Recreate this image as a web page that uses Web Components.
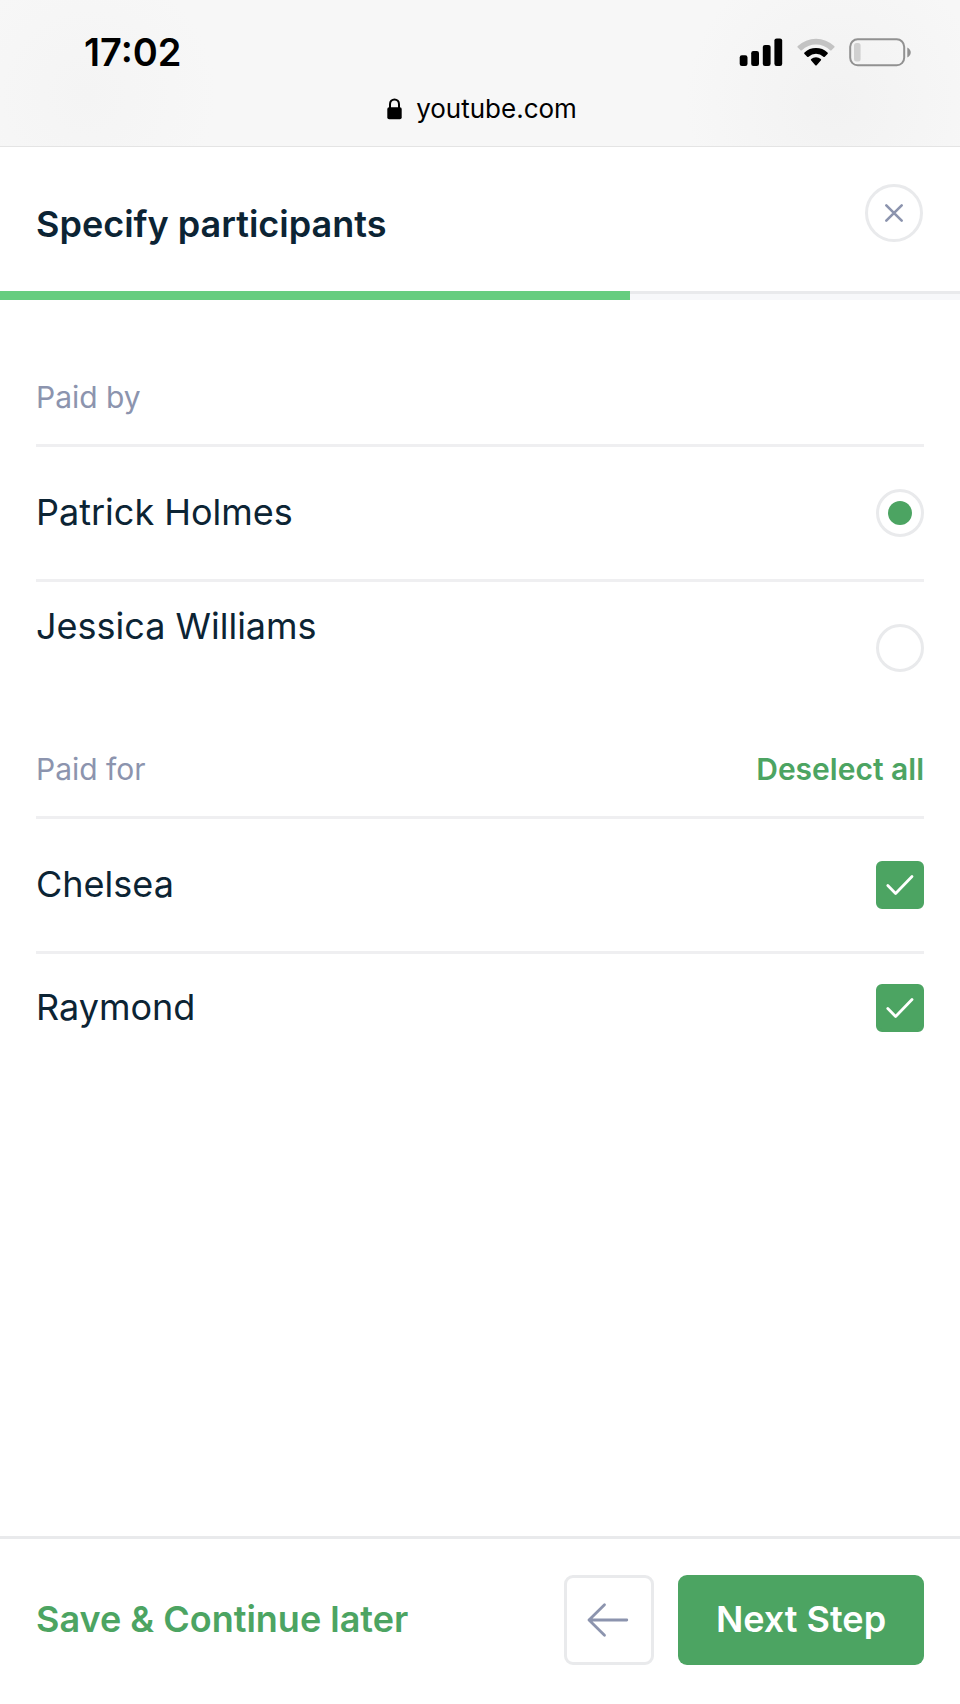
<!DOCTYPE html>
<html lang="en">
<head>
<meta charset="utf-8">
<meta name="viewport" content="width=device-width, initial-scale=1">
<title>Specify participants</title>
<style>
  :root {
    --ink: #0c2434;
    --muted: #8c94ae;
    --green: #4ca462;
    --green-light: #66cd7f;
    --line: #e9eaec;
    --rule: #efeff1;
  }
  body {
    margin: 0;
    background: #fff;
    color: var(--ink);
    font: 400 36px/44px Inter, "Liberation Sans", sans-serif;
  }
</style>
</head>
<body>
<expense-page>
  <browser-bar slot="top" time="17:02">youtube.com</browser-bar>
  <step-header slot="top">Specify participants</step-header>
  <participant-group legend="Paid by">
    <participant-row type="radio" checked>Patrick Holmes</participant-row>
    <participant-row type="radio" class="raised">Jessica Williams</participant-row>
  </participant-group>
  <participant-group legend="Paid for" action="Deselect all">
    <participant-row type="checkbox" checked>Chelsea</participant-row>
    <participant-row type="checkbox" class="compact" checked>Raymond</participant-row>
  </participant-group>
  <step-footer slot="bottom"></step-footer>
</expense-page>

<script>
class BaseElement extends HTMLElement {
  constructor() {
    super();
    this.attachShadow({ mode: "open" });
  }
  render(html) {
    this.shadowRoot.innerHTML = `<style>
      *, *::before { box-sizing: border-box; }
      button { margin: 0; padding: 0; border: 0; background: none; font: inherit; color: inherit; cursor: pointer; }
      svg { display: block; flex: none; }
    </style>` + html;
  }
}

customElements.define("expense-page", class extends BaseElement {
  connectedCallback() {
    this.render(`<style>
      :host { display: flex; flex-direction: column; min-height: 100vh; }
      main { flex: 1; padding: 42px 36px; }
    </style>
    <slot name="top"></slot>
    <main><slot></slot></main>
    <slot name="bottom"></slot>`);
  }
});

customElements.define("browser-bar", class extends BaseElement {
  connectedCallback() {
    this.render(`<style>
      :host {
        display: block; padding: 31px 48px 19px 84px; color: #000;
        border-bottom: 1px solid #e4e4e4;
        background:
          radial-gradient(circle at 87% 70%, #f2f2f2, #f2f2f200 150px),
          radial-gradient(circle at 9% 65%, #f4f4f4, #f4f4f400 130px),
          #f7f7f7;
      }
      .status { display: flex; align-items: center; gap: 14px; }
      time { flex: 1; padding-bottom: 2px; font-size: 38px; line-height: 42px; font-weight: 600; }
      .address {
        display: flex; align-items: center; justify-content: center; gap: 14px;
        margin: 16px 0 0 -32px; font-size: 26px; line-height: 36px;
      }
    </style>
    <div class="status">
      <time>${this.getAttribute("time")}</time>
      <svg width="44" height="30" viewBox="0 0 44 30" role="img" aria-label="Signal">
        <rect x="0.7" y="17.3" width="7.8" height="10.6" rx="2.2"/>
        <rect x="12.2" y="13" width="7.8" height="14.9" rx="2.2"/>
        <rect x="23.8" y="6.9" width="7.8" height="21" rx="2.2"/>
        <rect x="35.4" y="0.4" width="7.8" height="27.5" rx="2.2"/>
      </svg>
      <svg width="38" height="30" viewBox="0 0 38 30" role="img" aria-label="Wi-Fi">
        <path d="M.8 9.5a1 1 0 0 1 0-1.5 26.5 26.5 0 0 1 36.4 0 1 1 0 0 1 0 1.5L34.5 12.2a1 1 0 0 1-1.4 0 20.6 20.6 0 0 0-28.2 0 1 1 0 0 1-1.4 0z" fill="#c3c3c3"/>
        <path d="M7.5 16a1 1 0 0 1 0-1.5 17 17 0 0 1 23 0 1 1 0 0 1 0 1.5L27.8 18.7a1 1 0 0 1-1.4 0 11 11 0 0 0-14.8 0 1 1 0 0 1-1.4 0z"/>
        <path d="M14.2 22.6a1 1 0 0 1 0-1.5 7.5 7.5 0 0 1 9.6 0 1 1 0 0 1 0 1.5L19.7 27.2a1 1 0 0 1-1.4 0z"/>
      </svg>
      <svg width="63" height="30" viewBox="0 0 63 30" role="img" aria-label="Battery low">
        <rect x="1.2" y="1.3" width="54" height="26" rx="7.5" fill="none" stroke="#919191" stroke-width="2"/>
        <rect x="5" y="5" width="6.6" height="18.4" rx="2.5" fill="#d0d0d0"/>
        <path d="M58.3 9.5c4.6 2.3 4.6 7.7 0 10z" fill="#919191"/>
      </svg>
    </div>
    <div class="address">
      <svg width="15" height="22" viewBox="0 0 15 22" aria-hidden="true">
        <path d="M3 10V6.2a4.5 4.8 0 0 1 9 0V10" fill="none" stroke="#000" stroke-width="2"/>
        <rect x="0.3" y="9.3" width="14.4" height="12" rx="1.8"/>
      </svg>
      <span><slot></slot></span>
    </div>`);
  }
});

customElements.define("step-header", class extends BaseElement {
  connectedCallback() {
    this.render(`<style>
      :host { display: block; }
      header { display: flex; justify-content: space-between; align-items: flex-start; padding: 37px 37px 45px 36px; }
      h1 { margin: 18px 0 0; font-size: 36px; line-height: 44px; font-weight: 600; }
      button { display: grid; place-items: center; width: 58px; height: 58px; border: 3px solid var(--line); border-radius: 50%; }
      .progress { display: grid; grid-template-columns: 21fr 11fr; height: 9px; }
      .done { background: var(--green-light); }
      .left { background: #f7f8fa; border-top: 3px solid var(--line); }
    </style>
    <header>
      <h1><slot></slot></h1>
      <button type="button" aria-label="Close">
        <svg width="20" height="20" viewBox="0 0 20 20"><path d="M2.300 2.300l15.400 15.400M17.700 2.300L2.300 17.700" stroke="#8c94ae" stroke-width="2.600" stroke-linecap="round"/></svg>
      </button>
    </header>
    <div class="progress" role="progressbar" aria-label="Progress" aria-valuenow="66" aria-valuemin="0" aria-valuemax="100">
      <div class="done"></div><div class="left"></div>
    </div>`);
  }
});

customElements.define("participant-group", class extends BaseElement {
  connectedCallback() {
    const legend = this.getAttribute("legend");
    const action = this.getAttribute("action");
    this.render(`<style>
      :host { display: block; }
      .head { display: flex; justify-content: space-between; padding: 37px 0 29px; font-size: 30px; line-height: 36px; }
      h2 { margin: 0; font: inherit; color: var(--muted); }
      button { color: var(--green); font-weight: 600; }
    </style>
    <section role="group" aria-label="${legend}">
      <div class="head"><h2>${legend}</h2>${action ? `<button type="button">${action}</button>` : ""}</div>
      <slot></slot>
    </section>`);
    this.shadowRoot.querySelector("button")?.addEventListener("click", () => {
      for (const row of this.children) row.input.checked = false;
    });
    // Each radio lives in its own shadow root, so the group keeps them exclusive.
    this.addEventListener("pick", (e) => {
      if (e.target.input.type !== "radio") return;
      for (const row of this.children) row.input.checked = row === e.target;
    });
  }
});

customElements.define("participant-row", class extends BaseElement {
  get input() { return this.shadowRoot.querySelector("input"); }
  connectedCallback() {
    this.render(`<style>
      :host { display: block; border-top: 3px solid var(--rule); }
      label { display: flex; justify-content: space-between; align-items: center; height: 132px; cursor: pointer; }
      span { padding-bottom: 2px; }
      :host(.raised) span { padding-bottom: 44px; }
      :host(.compact) label { height: 108px; }
      .box { display: grid; flex: none; }
      .box > * { grid-area: 1 / 1; }
      input { appearance: none; display: grid; place-items: center; width: 48px; height: 48px; margin: 0; border: 3px solid var(--line); background: #fff; }
      input[type=radio] { border-radius: 50%; }
      input[type=radio]:checked::before { content: ""; width: 24px; height: 24px; border-radius: 50%; background: var(--green); }
      input[type=checkbox] { border-radius: 6px; }
      input[type=checkbox]:checked { background: var(--green); border-color: var(--green); }
      svg { visibility: hidden; pointer-events: none; }
      input[type=checkbox]:checked + svg { visibility: visible; }
    </style>
    <label>
      <span><slot></slot></span>
      <div class="box">
        <input type="${this.getAttribute("type")}" ${this.hasAttribute("checked") ? "checked" : ""}>
        <svg width="48" height="48" viewBox="0 0 48 48"><path d="M11.8 24.6l7.8 7.8L36 15.6" fill="none" stroke="#fff" stroke-width="2.8" stroke-linecap="round" stroke-linejoin="round"/></svg>
      </div>
    </label>`);
    this.input.addEventListener("change", () => this.dispatchEvent(new Event("pick", { bubbles: true })));
  }
});

customElements.define("step-footer", class extends BaseElement {
  connectedCallback() {
    this.render(`<style>
      :host { display: block; border-top: 3px solid var(--line); }
      footer { display: flex; align-items: center; gap: 24px; padding: 36px 36px 39px; font-weight: 600; }
      .save { margin-right: auto; padding-bottom: 2px; color: var(--green); }
      .back { display: grid; place-items: center; width: 90px; height: 90px; border: 3px solid var(--line); border-radius: 9px; }
      .next { width: 246px; height: 90px; padding-bottom: 2px; border-radius: 9px; background: var(--green); color: #fff; }
    </style>
    <footer>
      <button type="button" class="save">Save &amp; Continue later</button>
      <button type="button" class="back" aria-label="Back">
        <svg width="46" height="36" viewBox="0 0 46 36"><path d="M40.800 18H3M18.500 2.800L3 18l15.500 15.200" fill="none" stroke="#8c94ae" stroke-width="2.800" stroke-linecap="round" stroke-linejoin="round"/></svg>
      </button>
      <button type="submit" class="next">Next Step</button>
    </footer>`);
  }
});
</script>
</body>
</html>
